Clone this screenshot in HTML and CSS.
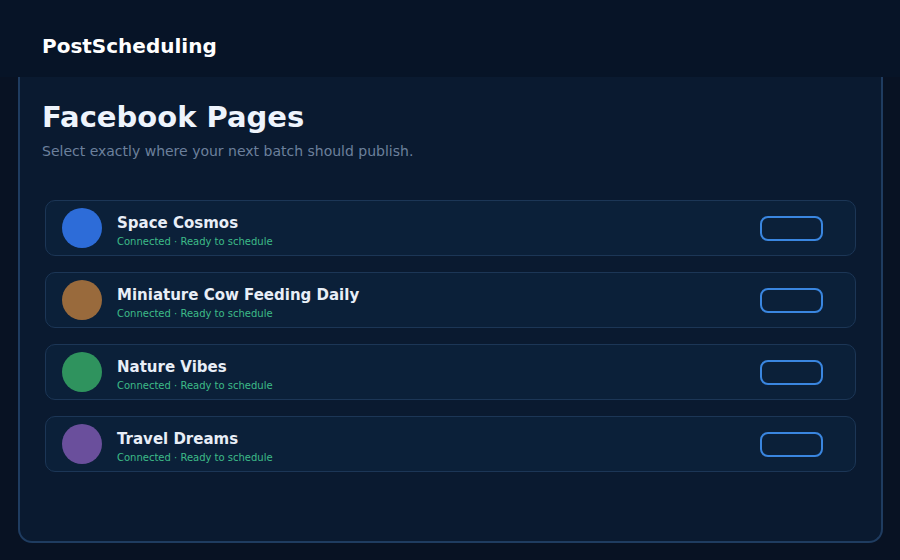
FILE: index.html
```html
<!DOCTYPE html>
<html lang="en">
<head>
  <meta charset="UTF-8" />
  <meta name="viewport" content="width=device-width, initial-scale=1.0"/>
  <title>PostScheduling - Facebook Pages</title>
  <link rel="stylesheet" href="styles.css">
</head>
<body>

  <div class="top-bar">
    <div class="brand">PostScheduling</div>
  </div>

  <div class="panel">
    <h1 class="panel-title">Facebook Pages</h1>
    <p class="panel-sub">Select exactly where your next batch should publish.</p>

    <div class="page-list">
      <div class="page-row">
        <div class="avatar blue"></div>
        <div class="page-info">
          <div class="page-name">Space Cosmos</div>
          <div class="page-status">Connected · Ready to schedule</div>
        </div>
        <button class="toggle"></button>
      </div>

      <div class="page-row">
        <div class="avatar brown"></div>
        <div class="page-info">
          <div class="page-name">Miniature Cow Feeding Daily</div>
          <div class="page-status">Connected · Ready to schedule</div>
        </div>
        <button class="toggle"></button>
      </div>

      <div class="page-row">
        <div class="avatar green"></div>
        <div class="page-info">
          <div class="page-name">Nature Vibes</div>
          <div class="page-status">Connected · Ready to schedule</div>
        </div>
        <button class="toggle"></button>
      </div>

      <div class="page-row">
        <div class="avatar purple"></div>
        <div class="page-info">
          <div class="page-name">Travel Dreams</div>
          <div class="page-status">Connected · Ready to schedule</div>
        </div>
        <button class="toggle"></button>
      </div>
    </div>
  </div>

</body>
</html>
```

FILE: styles.css
```css
* {
  box-sizing: border-box;
}

body {
  margin: 0;
  height: 560px;
  display: flex;
  flex-direction: column;
  background-color: #081223;
  font-family: "DejaVu Sans", Verdana, sans-serif;
  color: #e8eef7;
}

.top-bar {
  height: 77px;
  flex-shrink: 0;
  display: flex;
  align-items: center;
  padding: 14px 42px 0;
  background-color: #071427;
}

.brand {
  font-size: 20px;
  font-weight: bold;
  color: #ffffff;
}

.panel {
  flex: 1;
  margin: 0 17px 17px 18px;
  padding: 23px 22px 22px;
  background-color: #0a1a30;
  border: 2px solid #1f3c60;
  border-top: none;
  border-radius: 0 0 14px 14px;
}

.panel-title {
  margin: 0;
  font-size: 29px;
  font-weight: bold;
  color: #eef4fc;
}

.panel-sub {
  margin: 9px 0 0;
  font-size: 14px;
  color: #6c809c;
}

.page-list {
  display: flex;
  flex-direction: column;
  gap: 16px;
  margin-top: 41px;
  padding: 0 3px;
}

.page-row {
  display: flex;
  align-items: center;
  height: 56px;
  padding: 0 32px 0 16px;
  background-color: #0b2039;
  border: 1px solid #1c3656;
  border-radius: 10px;
}

.avatar {
  width: 40px;
  height: 40px;
  border-radius: 50%;
  flex-shrink: 0;
}

.avatar.blue { background-color: #2d6cd8; }
.avatar.brown { background-color: #996a3c; }
.avatar.green { background-color: #2f935e; }
.avatar.purple { background-color: #6a4f9c; }

.page-info {
  flex: 1;
  margin-left: 15px;
  padding-top: 4px;
}

.page-name {
  font-size: 15px;
  font-weight: bold;
  color: #e8eef7;
}

.page-status {
  margin-top: 4px;
  font-size: 10px;
  color: #3dbb88;
}

.toggle {
  width: 63px;
  height: 25px;
  padding: 0;
  background: transparent;
  border: 2px solid #3a86e0;
  border-radius: 8px;
  cursor: pointer;
}
```
